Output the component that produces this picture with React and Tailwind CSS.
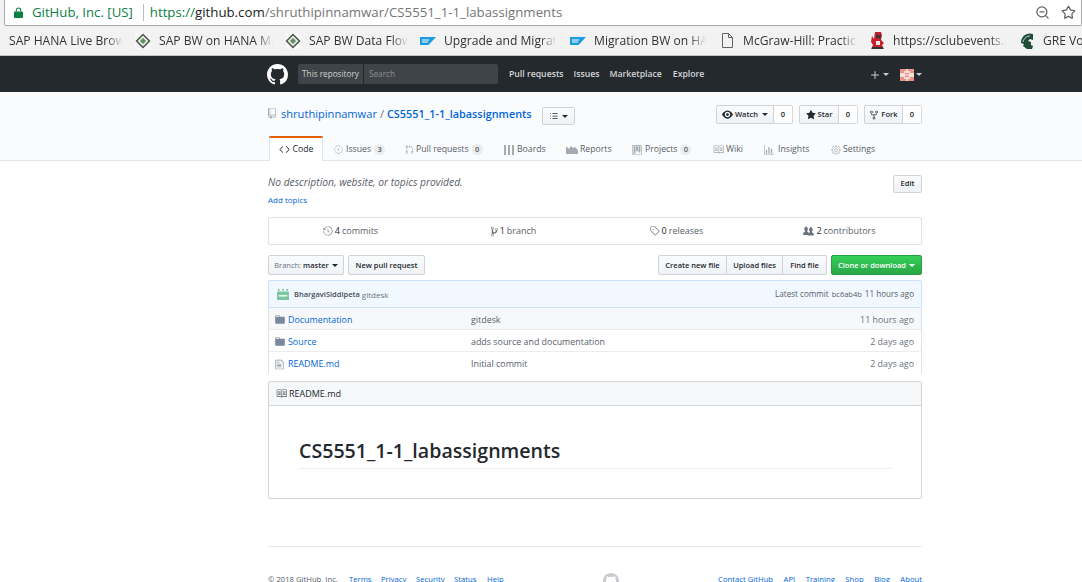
import React from 'react';
import { GoCode, GoGear, GoGitPullRequest, GoHistory, GoIssueOpened, GoListUnordered, GoRepoForked, GoStarFill, GoTag } from 'react-icons/go';
import { ZoomOut, Star, Plus } from 'lucide-react';

// old octicons, the current ones in react-icons have other shapes
const GH_MARK = 'M8 0C3.58 0 0 3.58 0 8c0 3.54 2.29 6.53 5.47 7.59.4.07.55-.17.55-.38 0-.19-.01-.82-.01-1.49-2.01.37-2.53-.49-2.69-.94-.09-.23-.48-.94-.82-1.13-.28-.15-.68-.52-.01-.53.63-.01 1.08.58 1.23.82.72 1.21 1.87.87 2.33.66.07-.52.28-.87.51-1.07-1.78-.2-3.64-.89-3.64-3.95 0-.87.31-1.59.82-2.15-.08-.2-.36-1.02.08-2.12 0 0 .67-.21 2.2.82.64-.18 1.32-.27 2-.27.68 0 1.36.09 2 .27 1.53-1.04 2.2-.82 2.2-.82.44 1.1.16 1.92.08 2.12.51.56.82 1.27.82 2.15 0 3.07-1.87 3.75-3.65 3.95.29.25.54.73.54 1.48 0 1.07-.01 1.93-.01 2.2 0 .21.15.46.55.38A8.013 8.013 0 0 0 16 8c0-4.42-3.58-8-8-8z';
const EYE = 'M8.06 2C3 2 0 8 0 8s3 6 8.06 6C13 14 16 8 16 8s-3-6-7.94-6zM8 12c-2.2 0-4-1.78-4-4 0-2.2 1.8-4 4-4 2.22 0 4 1.8 4 4 0 2.22-1.78 4-4 4zm2-4c0 1.11-.89 2-2 2-1.11 0-2-.89-2-2 0-1.11.89-2 2-2 1.11 0 2 .89 2 2z';
const REPO = 'M4 9H3V8h1v1zm0-3H3v1h1V6zm0-2H3v1h1V4zm0-2H3v1h1V2zm8-1v12c0 .55-.45 1-1 1H6v2l-1.5-1.5L3 16v-2H1c-.55 0-1-.45-1-1V1c0-.55.45-1 1-1h10c.55 0 1 .45 1 1zm-1 10H1v2h2v-1h3v1h5v-2zm0-10H2v9h9V1z';
const PEOPLE = 'M16 12.999c0 .439-.45 1-1 1H7.995c-.539 0-.994-.447-.995-.999H1c-.54 0-1-.561-1-1 0-2.634 3-4 3-4s.229-.409 0-1c-.841-.621-1.058-.59-1-3 .058-2.419 1.367-3 2.5-3s2.442.58 2.5 3c.058 2.41-.159 2.379-1 3-.229.59 0 1 0 1s1.549.711 2.42 2.088C9.196 9.369 10 8.999 10 8.999s.229-.409 0-1c-.841-.62-1.058-.59-1-3 .058-2.419 1.367-3 2.5-3s2.437.581 2.495 3c.059 2.41-.158 2.38-1 3-.229.59 0 1 0 1s3.005 1.366 3.005 4';
const FILE_TEXT = 'M6 5H2V4h4v1zM2 8h7V7H2v1zm0 2h7V9H2v1zm0 2h7v-1H2v1zm10-7.5V14c0 .55-.45 1-1 1H1c-.55 0-1-.45-1-1V2c0-.55.45-1 1-1h7.5L12 4.5zM11 5L8 2H1v12h10V5z';
const BRANCH = 'M10 5c0-1.11-.89-2-2-2a1.993 1.993 0 0 0-1 3.72v.3c-.02.52-.23.98-.63 1.38-.4.4-.86.61-1.38.63-.83.02-1.48.16-2 .45V4.72a1.993 1.993 0 0 0-1-3.72C.88 1 0 1.89 0 3a2 2 0 0 0 1 1.72v6.56c-.59.35-1 .99-1 1.72 0 1.11.89 2 2 2 1.11 0 2-.89 2-2 0-.53-.2-1-.53-1.36.09-.06.48-.41.59-.47.25-.11.56-.17.94-.17 1.05-.05 1.95-.45 2.75-1.25S8.95 7.77 9 6.73h-.02C9.59 6.37 10 5.73 10 5zM2 1.8c.66 0 1.2.55 1.2 1.2 0 .65-.55 1.2-1.2 1.2C1.35 4.2.8 3.65.8 3c0-.65.55-1.2 1.2-1.2zm0 12.41c-.66 0-1.2-.55-1.2-1.2 0-.65.55-1.2 1.2-1.2.65 0 1.2.55 1.2 1.2 0 .65-.55 1.2-1.2 1.2zm6-8c-.66 0-1.2-.55-1.2-1.2 0-.65.55-1.2 1.2-1.2.65 0 1.2.55 1.2 1.2 0 .65-.55 1.2-1.2 1.2z';
const FOLDER = 'M13 4H7V3c0-.66-.31-1-1-1H1c-.55 0-1 .45-1 1v10c0 .55.45 1 1 1h12c.55 0 1-.45 1-1V5c0-.55-.45-1-1-1zM6 4H1V3h5v1z';
const BOOK = 'M3 5h4v1H3V5zm0 3h4V7H3v1zm0 2h4V9H3v1zm11-5h-4v1h4V5zm0 2h-4v1h4V7zm0 2h-4v1h4V9zm2-6v9c0 .55-.45 1-1 1H9.5l-1 1-1-1H2c-.55 0-1-.45-1-1V3c0-.55.45-1 1-1h5.5l1 1 1-1H15c.55 0 1 .45 1 1zm-8 .5L7.5 3H2v9h6V3.5zm7-.5H9.5l-.5.5V12h6V3z';
const GRAPH = 'M16 14v1H0V0h1v14h15zM5 13H3V8h2v5zm4 0H7V3h2v10zm4 0h-2V6h2v7z';
const PROJECT = 'M10 12h3V2h-3v10zm-4-2h3V2H6v8zm-4 4h3V2H2v12zm-1 1h13V1H1v14zM14 0H1a1 1 0 0 0-1 1v14a1 1 0 0 0 1 1h13a1 1 0 0 0 1-1V1a1 1 0 0 0-1-1z';

const Oct = ({ d, vb = '0 0 16 16', className }) => (
  <svg viewBox={vb} className={className} fill="currentColor"><path fillRule="evenodd" d={d} /></svg>
);

const Caret = ({ className = 'border-t-current' }) => (
  <span className={`inline-block w-0 h-0 border-x-[3px] border-x-transparent border-t-[3px] ${className}`} />
);

const Diamond = () => (
  <svg viewBox="0 0 16 16" className="w-[16px] h-[16px]">
    <rect width="16" height="16" fill="#f8f8f8" />
    <path d="M8 0.5 15.5 8 8 15.5 0.5 8z" fill="#4a524a" />
    <path d="M8 2.5 13.5 8 8 13.5 2.5 8z" fill="#e3e8dc" />
    <path d="M8 5 11 8 8 11 5 8z" fill="#5f8f68" />
  </svg>
);

const SapLogo = () => (
  <svg viewBox="0 0 16 8" className="w-[16px] h-[8px]">
    <path d="M0 0H16L8.5 8H0z" fill="#1d9be0" />
    <path d="M2 3H9M2 5H8" stroke="#fff" strokeWidth="1" />
  </svg>
);

const PageIcon = () => (
  <svg viewBox="0 0 11 15" className="w-[11px] h-[15px]" fill="none" stroke="#5f6368">
    <path d="M.5.5h6l4 4v10H.5zM6.5.5v4h4" />
  </svg>
);

const Mascot = () => (
  <svg viewBox="0 0 15 17" className="w-[15px] h-[17px]">
    <path d="M5 0h6l1 3-1 5 3 3-2 2 2 4H1l2-4-2-3 1-6 2 3z" fill="#c4202c" />
    <path d="M6 3h5v3H6z" fill="#3a3a3a" />
    <path d="M6 9h4v4H6z" fill="#e8e8e8" />
    <path d="M2 15h11v2H2z" fill="#333" />
  </svg>
);

const Spartan = () => (
  <svg viewBox="0 0 15 16" className="w-[15px] h-[16px]">
    <path d="M13 1C7-1 1 3 1 10l3 1-1 2 4 3h5l1-3-2-1 0-3-3-1 2-2 3 1z" fill="#1f4d3a" />
    <path d="M10 3C7 3 4 5 3 9" fill="none" stroke="#f2f2f2" strokeWidth="0.8" />
  </svg>
);

const bookmarks = [
  { text: 'SAP HANA Live Browser', w: 'w-[114px]', ml: 'ml-[9px]' },
  { icon: <Diamond />, text: 'SAP BW on HANA Migration', w: 'w-[114px]', ml: 'ml-[12px]' },
  { icon: <Diamond />, text: 'SAP BW Data Flow', w: 'w-[99px]', ml: 'ml-[12px]' },
  { icon: <SapLogo />, text: 'Upgrade and Migration', w: 'w-[112px]', ml: 'ml-[12px]' },
  { icon: <SapLogo />, text: 'Migration BW on HANA', w: 'w-[112px]', ml: 'ml-[14px]' },
  { icon: <PageIcon />, text: 'McGraw-Hill: Practice', w: 'w-[114px]', ml: 'ml-[13px]' },
  { icon: <Mascot />, text: 'https://sclubevents.com', w: 'w-[113px]', ml: 'ml-[12px]' },
  { icon: <Spartan />, text: 'GRE Vocabulary', w: 'w-[60px]', ml: 'ml-[13px]' },
];

const Browser = () => (
  <div className="bg-[#f2f2f2] border-b border-[#c4c4c4] h-[56px]">
    <div className="h-[26px] bg-white border-b border-x border-[#a9a9a9] rounded-b-[2px] flex items-center pl-[9px] pr-[5px] ml-[4px]">
      <svg viewBox="0 0 10 12" className="w-[9px] h-[11px]">
        <path d="M2.5 5V3.5a2.5 2.5 0 0 1 5 0V5" fill="none" stroke="#0b8043" strokeWidth="1.2" />
        <rect y="5" width="10" height="7" rx="1" fill="#0b8043" />
      </svg>
      <span className="ml-[9px] pt-[1px] text-[13.2px] text-[#0b8043] leading-none">GitHub, Inc. [US]</span>
      <span className="ml-[10px] h-[17px] border-l border-[#bdbdbd]" />
      <span className="ml-[6px] pt-[1px] text-[13.25px] leading-none text-[#757575] whitespace-nowrap">
        <span className="text-[#0b8043]">https://</span>
        <span className="text-[#222]">github.com</span>
        /shruthipinnamwar/CS5551_1-1_labassignments
      </span>
      <ZoomOut size={15} className="ml-auto text-[#5f6368]" />
      <Star size={15} className="ml-[11px] text-[#5f6368]" />
    </div>
    <div className="h-[29px] pt-[1px] flex items-center overflow-hidden">
      {bookmarks.map((b) => (
        <div key={b.text} className={`flex items-center shrink-0 ${b.ml}`}>
          {b.icon && <span className="w-[16px] mr-[8px] flex justify-center">{b.icon}</span>}
          <span className={`${b.w} overflow-hidden whitespace-nowrap text-[12.1px] text-[#333] [mask-image:linear-gradient(to_left,transparent,black_16px)]`}>
            {b.text}
          </span>
        </div>
      ))}
    </div>
  </div>
);

const Avatar = () => (
  <svg viewBox="0 0 14 12" className="w-[14px] h-[12px] block">
    <rect width="14" height="12" fill="#f3d9d3" />
    <path d="M0 0h6v2H4v2H0zM8 0h6v4h-4V2H8zM0 8h4v2h2v2H0zM10 8h4v4H8v-2h2zM5 4h4v4H5z" fill="#e69489" />
    <path d="M0 5.5h14v1H0z" fill="#f8ece9" />
  </svg>
);

const TopNav = () => (
  <div className="h-[36px] pt-[1px] bg-[#24292e] pl-[268px] text-[8.7px] font-semibold text-[#d3d6d8]">
    <div className="w-[654px] h-full flex items-center">
      <Oct d={GH_MARK} className="w-[21px] h-[21px] text-white shrink-0 -ml-[1px] -mt-[1px]" />
      <div className="ml-[10px] w-[200px] h-[20px] -mt-[1px] bg-[#3f4448] rounded-[2px] flex items-center font-normal text-[8.2px]">
        <span className="w-[66px] h-full flex items-center justify-center border-r border-[#24292e] text-[#d0d2d3]">This repository</span>
        <span className="pl-[5px] text-[#8b9094]">Search</span>
      </div>
      <span className="ml-[11px]">Pull requests</span>
      <span className="ml-[10px]">Issues</span>
      <span className="ml-[10px]">Marketplace</span>
      <span className="ml-[11px]">Explore</span>
      <div className="ml-auto flex items-center gap-[2px] text-[#c9cbcd]">
        <Plus size={12} strokeWidth={2} />
        <Caret />
        <span className="ml-[9px]"><Avatar /></span>
        <Caret />
      </div>
    </div>
  </div>
);

const btn = 'bg-gradient-to-b from-[#fafbfc] to-[#eff3f6] border border-[#cfd2d6]';

const Social = ({ icon, label, caret, w }) => (
  <div className="flex h-[19px] text-[7.6px] font-semibold text-[#24292e]">
    <div className={`${btn} ${w} rounded-l-[2px] flex items-center justify-center gap-[2px]`}>
      {icon}
      {label}
      {caret && <Caret className="border-t-[#24292e] ml-[2px]" />}
    </div>
    <div className="border border-l-0 border-[#d5d8db] bg-white rounded-r-[2px] flex items-center justify-center w-[19px]">0</div>
  </div>
);

const BoardsIcon = () => (
  <svg viewBox="0 0 10 10" className="w-[10px] h-[10px]" fill="currentColor">
    <rect width="2" height="10" /><rect x="4" width="2" height="10" /><rect x="8" width="2" height="10" />
  </svg>
);

const ReportsIcon = () => (
  <svg viewBox="0 0 12 9" className="w-[12px] h-[9px]" fill="currentColor">
    <path d="M0 9V2h1l2 2 2-3 2 2 2-1 3 3v4z" />
  </svg>
);

const Counter = ({ children }) => (
  <span className="ml-[3px] w-[11px] h-[11px] rounded-full bg-[#e9ebed] text-[7.5px] font-semibold text-[#586069] flex items-center justify-center">
    {children}
  </span>
);

const tabs = [
  { icon: <GoIssueOpened size={9} />, label: 'Issues', count: 3, w: 'w-[71px]', slot: 'w-[12px]' },
  { icon: <GoGitPullRequest size={9} />, label: 'Pull requests', count: 0, w: 'w-[99px]', slot: 'w-[11px]' },
  { icon: <BoardsIcon />, label: 'Boards', w: 'w-[62px]', slot: 'w-[13px]' },
  { icon: <ReportsIcon />, label: 'Reports', w: 'w-[66px]', slot: 'w-[14px]' },
  { icon: <Oct d={PROJECT} vb="0 0 15 16" className="w-[10px] h-[10px]" />, label: 'Projects', count: 0, w: 'w-[81px]', slot: 'w-[13px]' },
  { icon: <Oct d={BOOK} className="w-[11px] h-[11px]" />, label: 'Wiki', w: 'w-[51px]', slot: 'w-[13px]' },
  { icon: <Oct d={GRAPH} className="w-[10px] h-[10px]" />, label: 'Insights', w: 'w-[67px]', slot: 'w-[14px]' },
  { icon: <GoGear size={10} />, label: 'Settings', w: 'w-[60px]', slot: 'w-[12px]' },
];

const RepoHead = () => (
  <div className="h-[69px] bg-[#fafbfc] border-b border-[#e1e4e8] pl-[268px]">
    <div className="w-[654px] flex flex-col">
      <div className="h-[44px] flex items-start">
        <div className="mt-[13px] flex items-center text-[11.1px] leading-[17px] text-[#6a737d]">
          <Oct d={REPO} vb="0 0 12 16" className="w-[8px] h-[11px] text-[#a3aab1] mr-[5px]" />
          <span className="text-[#0366d6]">shruthipinnamwar</span>
          <span className="mx-[3px]">/</span>
          <span className="text-[#0366d6] font-semibold text-[10.85px]">CS5551_1-1_labassignments</span>
        </div>
        <div className={`${btn} mt-[15px] ml-[10px] w-[33px] h-[18px] rounded-[2px] flex items-center justify-center gap-[3px] text-[#24292e]`}>
          <GoListUnordered size={10} />
          <Caret />
        </div>
        <div className="ml-auto mt-[13px] flex gap-[6px]">
          <Social icon={<Oct d={EYE} className="w-[11px] h-[11px]" />} label="Watch" caret w="w-[58px]" />
          <Social icon={<GoStarFill size={10} />} label="Star" w="w-[40px]" />
          <Social icon={<GoRepoForked size={10} />} label="Fork" w="w-[39px]" />
        </div>
      </div>
      <div className="h-[25px] flex items-stretch text-[8.7px] text-[#586069]">
        <div className="relative z-10 h-[25px] ml-[1px] mr-[11px] w-[54px] bg-white border-x border-[#e1e4e8] border-t-[2px] border-t-[#e36209] flex items-center justify-center gap-[3px] text-[#24292e]">
          <GoCode size={11} />
          Code
        </div>
        {tabs.map((t) => (
          <div key={t.label} className={`flex items-center pt-[2px] shrink-0 ${t.w}`}>
            <span className={`text-[#a3aab1] flex ${t.slot}`}>{t.icon}</span>
            {t.label}
            {t.count !== undefined && <Counter>{t.count}</Counter>}
          </div>
        ))}
      </div>
    </div>
  </div>
);

const Stat = ({ icon, children }) => (
  <div className="flex-1 flex items-center justify-center gap-[2px]">
    <span className="text-[#6a737d] flex">{icon}</span>
    {children}
  </div>
);

const folderIcon = <Oct d={FOLDER} vb="0 0 14 16" className="w-[10px] h-[11px] text-[#79889b]" />;

const files = [
  { icon: folderIcon, name: 'Documentation', msg: 'gitdesk', age: '11 hours ago' },
  { icon: folderIcon, name: 'Source', msg: 'adds source and documentation', age: '2 days ago' },
  { icon: <Oct d={FILE_TEXT} vb="0 0 12 16" className="w-[9px] h-[11px] text-[#8a929a]" />, name: 'README.md', msg: 'Initial commit', age: '2 days ago' },
];

const Committer = () => (
  <svg viewBox="0 0 14 13" className="w-[12px] h-[11px]">
    <path d="M1 0h2v2H1zM6 0h2v2H6zM11 0h2v2h-2z" fill="#7ac5a0" />
    <path d="M0 3h14v10H0z" fill="#7ac5a0" />
    <path d="M2 7h10v2H2z" fill="#e8f6ef" />
  </svg>
);

const Repo = () => (
  <div className="w-[654px] ml-[268px]">
    <div className="h-[56px] pt-[14px] flex justify-between">
      <div>
        <div className="text-[10.25px] leading-[15px] italic text-[#586069]">No description, website, or topics provided.</div>
        <div className="mt-[4px] text-[8px] leading-[12px] text-[#0366d6]">Add topics</div>
      </div>
      <div className={`${btn} h-[18px] w-[29px] rounded-[2px] flex items-center justify-center text-[7.6px] font-semibold text-[#24292e]`}>Edit</div>
    </div>
    <div className="h-[28px] border border-[#dfe2e5] rounded-[2px] flex text-[9px] text-[#586069]">
      <Stat icon={<GoHistory size={10} />}><b className="font-medium text-[#24292e]">4</b> commits</Stat>
      <Stat icon={<Oct d={BRANCH} vb="0 0 10 16" className="w-[7px] h-[11px]" />}><b className="font-medium text-[#24292e]">1</b> branch</Stat>
      <Stat icon={<GoTag size={10} />}><b className="font-medium text-[#24292e]">0</b> releases</Stat>
      <Stat icon={<Oct d={PEOPLE} className="w-[11px] h-[11px]" />}><b className="font-medium text-[#24292e]">2</b> contributors</Stat>
    </div>
    <div className="mt-[10px] h-[20px] flex text-[7.5px] font-semibold text-[#24292e]">
      <div className={`${btn} w-[76px] pt-[1px] rounded-[2px] flex items-center justify-center gap-[3px]`}>
        <span><span className="font-normal text-[#6a737d]">Branch:</span> master</span>
        <Caret className="border-t-[#24292e]" />
      </div>
      <div className={`${btn} ml-[4px] w-[77px] pt-[1px] rounded-[2px] flex items-center justify-center`}>New pull request</div>
      <div className="ml-auto flex">
        <div className={`${btn} w-[69px] pt-[1px] rounded-l-[2px] flex items-center justify-center`}>Create new file</div>
        <div className={`${btn} w-[56px] pt-[1px] border-l-0 flex items-center justify-center`}>Upload files</div>
        <div className={`${btn} w-[44px] pt-[1px] border-l-0 rounded-r-[2px] flex items-center justify-center`}>Find file</div>
        <div className="ml-[4px] w-[91px] pt-[1px] rounded-[2px] bg-gradient-to-b from-[#34d058] to-[#28a745] border border-[#2a9c43] text-white flex items-center justify-center gap-[3px]">
          Clone or download
          <Caret className="border-t-white" />
        </div>
      </div>
    </div>
    <div className="mt-[5px] h-[28px] pt-[1px] bg-[#f1f8ff] border border-[#c8e1ff] rounded-t-[2px] flex items-center pl-[8px] pr-[7px] text-[7.5px] text-[#6a737d]">
      <Committer />
      <span className="ml-[5px] font-semibold text-[#444d56]">BhargaviSiddipeta</span>
      <span className="ml-[2px] text-[8px]">gitdesk</span>
      <span className="ml-auto text-[8.1px] text-[#586069]">Latest commit</span>
      <span className="ml-[3px] text-[#586069]">bc6ab4b</span>
      <span className="ml-[3px] text-[8.1px] text-[#586069]">11 hours ago</span>
    </div>
    <div className="border-x border-[#dfe2e5] text-[8.9px]">
      {files.map((f, i) => (
        <div key={f.name} className={`h-[22px] flex items-center pt-[2px] pl-[6px] pr-[7px] ${i === 0 ? 'bg-[#f6f8fa]' : 'bg-white'} ${i < 2 ? 'border-b border-[#eaecef]' : ''}`}>
          <span className="w-[13px] flex">{f.icon}</span>
          <span className="w-[183px] text-[#0366d6]">{f.name}</span>
          <span className="text-[#586069]">{f.msg}</span>
          <span className="ml-auto text-[#6a737d]">{f.age}</span>
        </div>
      ))}
    </div>
    <div className="mt-[7px] h-[118px] border border-[#d1d5da] rounded-[2px]">
      <div className="h-[24px] bg-[#f6f8fa] border-b border-[#d1d5da] flex items-center pl-[7px] text-[9px] font-medium text-[#24292e]">
        <Oct d={BOOK} className="w-[11px] h-[11px] text-[#586069] mr-[2px]" />
        README.md
      </div>
      <div className="mx-[30px] mt-[31px] h-[32px] border-b border-[#eaecef] text-[19.6px] leading-[27px] font-semibold text-[#24292e]">
        CS5551_1-1_labassignments
      </div>
    </div>
  </div>
);

const Footer = () => (
  <div className="w-[654px] ml-[268px] mt-[47px] border-t border-[#e6e8eb] pt-[26px] flex justify-between items-start text-[7.7px] leading-[12px] text-[#586069]">
    <div className="flex">
      <span className="w-[81px]">© 2018 GitHub, Inc.</span>
      <span className="w-[32px] text-[#0366d6]">Terms</span>
      <span className="w-[35px] text-[#0366d6]">Privacy</span>
      <span className="w-[38px] text-[#0366d6]">Security</span>
      <span className="w-[33px] text-[#0366d6]">Status</span>
      <span className="text-[#0366d6]">Help</span>
    </div>
    <Oct d={GH_MARK} className="w-[16px] h-[16px] text-[#c6cbd1]" />
    <div className="flex gap-[10.5px] text-[#0366d6]">
      <span>Contact GitHub</span><span>API</span><span>Training</span><span>Shop</span><span>Blog</span><span>About</span>
    </div>
  </div>
);

export default function App() {
  return (
    <div className="w-[1082px] h-[582px] overflow-hidden bg-white font-['Open_Sans',sans-serif]">
      <Browser />
      <TopNav />
      <RepoHead />
      <Repo />
      <Footer />
    </div>
  );
}
